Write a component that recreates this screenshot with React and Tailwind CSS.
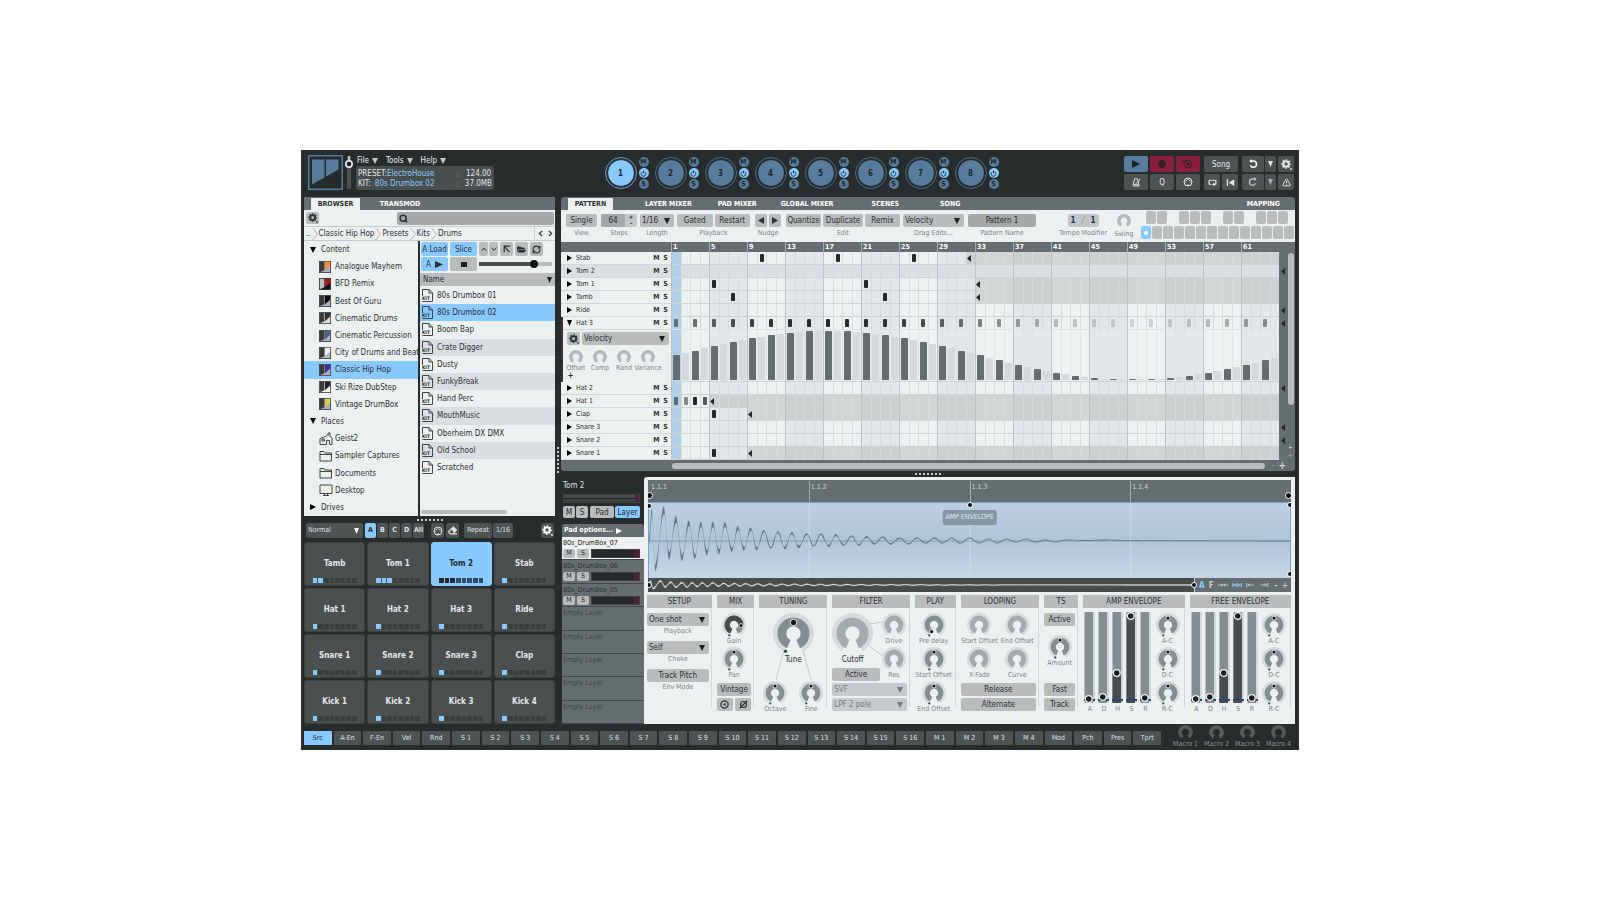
import React from 'react';
import { FaFolderOpen, FaEraser } from 'react-icons/fa';
import { TriangleAlert, Search, RefreshCw } from 'lucide-react';

const TREE = [
  { label: 'Content', group: 'open' },
  { label: 'Analogue Mayhem', kit: ['#3a3a3a', '#f58a2c', '#a9aec0'] },
  { label: 'BFD Remix', kit: ['#b9bdbd', '#b0151c', '#111111'] },
  { label: 'Best Of Guru', kit: ['#3a3a3a', '#0a0a0a', '#a9aec0'] },
  { label: 'Cinematic Drums', kit: ['#3a3a3a', '#2f3234', '#dfe2e4'] },
  { label: 'Cinematic Percussion', kit: ['#3a3a3a', '#4c5f80', '#a9aec0'] },
  { label: 'City of Drums and Beat', kit: ['#3a3a3a', '#eceff0', '#b4b8c6'] },
  { label: 'Classic Hip Hop', kit: ['#3a3a3a', '#41309c', '#a9aec0'], active: true },
  { label: 'Ski Rize DubStep', kit: ['#3a3a3a', '#222425', '#f2f4f5'] },
  { label: 'Vintage DrumBox', kit: ['#3a3a3a', '#d8d04a', '#a9aec0'] },
  { label: 'Places', group: 'open' },
  { label: 'Geist2', icon: 'home' },
  { label: 'Sampler Captures', icon: 'folder' },
  { label: 'Documents', icon: 'folder' },
  { label: 'Desktop', icon: 'desktop' },
  { label: 'Drives', group: 'closed' },
];

const KITS = ['80s Drumbox 01', '80s Drumbox 02', 'Boom Bap', 'Crate Digger', 'Dusty', 'FunkyBreak', 'Hand Perc', 'MouthMusic', 'Oberheim DX DMX', 'Old School', 'Scratched'];

const PADS = [
  ['Tamb', 2], ['Tom 1', 3], ['Tom 2', 3], ['Stab', 1],
  ['Hat 1', 1], ['Hat 2', 1], ['Hat 3', 1], ['Ride', 1],
  ['Snare 1', 1], ['Snare 2', 1], ['Snare 3', 1], ['Clap', 1],
  ['Kick 1', 1], ['Kick 2', 1], ['Kick 3', 1], ['Kick 4', 1],
];

const STEPS = Array.from({ length: 64 }, (_, i) => i);
const wave = (i) => 0.5 + 0.5 * Math.sin((2 * Math.PI * i) / 64);

const hat3 = {};
STEPS.filter((i) => i % 2 === 0).forEach((i) => { hat3[i] = 0.15 + 0.85 * wave(i); });

const TRACKS = [
  { name: 'Stab', notes: { 9: 1, 17: 1, 25: 1 }, end: 31 },
  { name: 'Tom 2', notes: {}, selected: true },
  { name: 'Tom 1', notes: { 4: 1, 20: 1 }, end: 32 },
  { name: 'Tamb', notes: { 6: 1, 22: 1 }, end: 32 },
  { name: 'Ride', notes: {} },
  { name: 'Hat 3', notes: hat3, open: true },
  { name: 'Hat 2', notes: {} },
  { name: 'Hat 1', notes: { 0: 0.6, 1: 0.5, 2: 1, 3: 0.75 }, end: 4 },
  { name: 'Clap', notes: { 4: 1 }, end: 8 },
  { name: 'Snare 3', notes: {} },
  { name: 'Snare 2', notes: {} },
  { name: 'Snare 1', notes: { 4: 1 }, end: 8 },
];

const SOURCES = ['Src', 'A-En', 'F-En', 'Vel', 'Rnd', ...Array.from({ length: 16 }, (_, i) => `S ${i + 1}`), 'M 1', 'M 2', 'M 3', 'M 4', 'Mod', 'Pch', 'Pres', 'Tprt'];

// Peaks and troughs of the tom sample: [x, height above the centre line]
const EXTREMA = [
  [0, 0], [3, 31], [6, -27], [15, 31], [20, -15], [27, 22], [33, -17], [40, 18], [46, -16], [52, 17], [58, -12], [64, 17],
  [70, -11], [76, 17], [83, -9], [89, 13], [95, -8], [102, 12], [108, -8], [115, 10], [122, -7], [129, 9], [136, -7],
  [143, 8], [150, -6], [158, 7], [165, -5], [172, 7], [180, -5], [187, 6], [195, -4], [203, 5], [210, -4], [218, 4],
  [226, -3], [234, 4], [242, -3], [251, 3], [260, -3], [268, 3], [277, -2], [286, 3], [294, -2], [303, 3], [312, -2],
  [321, 3], [331, -2], [340, 2], [349, -2], [358, 2], [368, -1], [377, 2], [387, -1], [397, 1], [407, -1], [417, 1],
  [436, 0.5], [457, 1], [477, 0.6], [510, 0.3], [642, 0],
];

function sampleAt(x) {
  const n = EXTREMA.findIndex((p) => p[0] >= x);
  if (n <= 0) return EXTREMA[0][1];
  const [x0, y0] = EXTREMA[n - 1];
  const [x1, y1] = EXTREMA[n];
  const t = (1 - Math.cos((Math.PI * (x - x0)) / (x1 - x0))) / 2;
  return y0 + (y1 - y0) * t;
}

function wavePath(mid, scale, thick) {
  const top = [];
  const bottom = [];
  for (let x = 0; x <= 642; x += 1) {
    const y = mid - sampleAt(x) * scale;
    const rough = thick * Math.exp(-x / 110) * (1 + 0.7 * Math.sin(x * 7.3));
    top.push(`${x},${(y - 0.4 - rough).toFixed(2)}`);
    bottom.unshift(`${x},${(y + 0.4 + rough).toFixed(2)}`);
  }
  return `M${top.join('L')}L${bottom.join('L')}Z`;
}

const Down = ({ className = 'w-[6px] h-[6px]' }) => (
  <svg viewBox="0 0 10 10" preserveAspectRatio="none" fill="currentColor" className={className}><path d="M0 0h10L5 10z" /></svg>
);
const Right = ({ className = 'w-[6px] h-[6px]' }) => (
  <svg viewBox="0 0 10 10" preserveAspectRatio="none" fill="currentColor" className={className}><path d="M0 0v10l10-5z" /></svg>
);
const Left = ({ className = 'w-[6px] h-[6px]' }) => (
  <svg viewBox="0 0 10 10" preserveAspectRatio="none" fill="currentColor" className={className}><path d="M10 0v10L0 5z" /></svg>
);

const Gear = ({ className = 'w-[10px] h-[10px]' }) => (
  <svg viewBox="0 0 24 24" fill="none" stroke="currentColor" className={className}>
    <circle cx="11" cy="11" r="6" strokeWidth="4.5" />
    <circle cx="11" cy="11" r="9" strokeWidth="3" pathLength="80" strokeDasharray="5 5" strokeDashoffset="2.5" />
    <rect x="20" y="20" width="3.5" height="3.5" fill="currentColor" stroke="none" />
  </svg>
);

// Five pin MIDI socket
const Midi = ({ className = 'w-[10px] h-[10px]' }) => (
  <svg viewBox="0 0 12 12" fill="none" stroke="currentColor" className={className}>
    <circle cx="6" cy="6" r="4.800" strokeWidth="1.200" />
    <g fill="currentColor" stroke="none">
      <circle cx="3.200" cy="6" r="0.700" /><circle cx="4" cy="4" r="0.700" /><circle cx="6" cy="3.200" r="0.700" /><circle cx="8" cy="4" r="0.700" /><circle cx="8.800" cy="6" r="0.700" />
      <path d="M5 9h2v1.800H5z" />
    </g>
  </svg>
);

const Power = () => (
  <svg viewBox="0 0 12 12" fill="none" stroke="currentColor" strokeWidth="1.5" className="w-[7px] h-[7px]">
    <path d="M4 3.2a4 4 0 1 0 4 0M6 1v4.5" />
  </svg>
);

function polar(c, r, deg) {
  const a = ((deg - 90) * Math.PI) / 180;
  return `${(c + r * Math.cos(a)).toFixed(2)} ${(c + r * Math.sin(a)).toFixed(2)}`;
}
function arc(r, from, to) {
  return `M${polar(12, r, from)}A${r} ${r} 0 ${to - from > 180 ? 1 : 0} 1 ${polar(12, r, to)}`;
}

// Plain grey knob without ring or pointer
const MiniKnob = ({ color = '#b6b9bb', className = 'w-[14px] h-[14px]' }) => (
  <svg viewBox="0 0 24 24" fill="none" className={className}>
    <path d={arc(8.8, -148, 148)} stroke={color} strokeWidth="6" />
  </svg>
);

const Dial = ({ big, off, value = 0, fill, dark }) => {
  const [px, py] = polar(12, big ? 6.5 : 7, value).split(' ');
  return (
    <svg viewBox="0 0 24 24" fill="none" className={big ? 'w-[41px] h-[41px]' : 'w-[24px] h-[24px]'}>
      <path d={arc(10.7, -150, 150)} stroke="#d7dadb" strokeWidth="2.6" />
      <path d={arc(6.8, -156, 156)} stroke={off ? '#a3abaf' : '#848d92'} strokeWidth="5.2" />
      {fill && <path d={arc(6.8, -156, 90)} stroke={dark} strokeWidth="5.2" />}
      {!off && (
        <>
          <circle cx={px} cy={py} r={big ? 2 : 2.4} fill="#e6e9ea" />
          <circle cx={px} cy={py} r={big ? 1.5 : 1.6} fill="#111" />
          <circle cx="7.3" cy="22.4" r={big ? 1 : 1.1} fill="#264a74" />
        </>
      )}
    </svg>
  );
};

function Knob({ label, big, ...rest }) {
  return (
    <label className={`relative flex shrink-0 flex-col items-center text-[7px] whitespace-nowrap ${big ? 'h-[52px] leading-[11px] text-[#2c3032] text-[8px]' : 'h-[34px] leading-[9px] text-[#7d8488]'}`}>
      <Dial big={big} {...rest} />
      <span>{label}</span>
      <input type="range" className="sr-only" />
    </label>
  );
}

const Btn = ({ className = '', children, ...rest }) => (
  <button type="button" className={`flex items-center justify-center rounded-[2px] whitespace-nowrap ${className}`} {...rest}>{children}</button>
);

function Drop({ value, label, className = '', muted }) {
  return (
    <span className={`relative flex ${className}`}>
      <select aria-label={label} defaultValue={value} className={`appearance-none h-[13px] w-full rounded-[2px] pl-[2px] outline-none ${muted ? 'bg-[#c7cacc] text-[#73797c]' : 'bg-[#b9bbbc] text-[#2c3032]'}`}>
        <option>{value}</option>
      </select>
      <Down className={`pointer-events-none absolute right-[4px] top-[4px] w-[6px] h-[6px] ${muted ? 'text-[#73797c]' : 'text-[#1d2021]'}`} />
    </span>
  );
}

function KitThumb({ colors }) {
  return (
    <svg viewBox="0 0 12 12" className="w-[12px] h-[12px] shrink-0">
      <rect width="12" height="12" fill="#3c3f42" />
      <rect x="0.8" y="0.8" width="10.4" height="10.4" fill={colors[2]} />
      <path d="M0.8 0.8h4.6v8.4l-4.6 2z" fill={colors[0]} />
      <path d="M6 0.8h5.2v3.8L6 9.2z" fill={colors[1]} />
    </svg>
  );
}

function PlaceIcon({ type }) {
  const paths = {
    home: 'M1 6.500 6.500 4.500 9 2.500l4 3.500v6.500h-2.500V8.500h-3v4H1zM9 2.500V1h2v2.500M3 7h2.500v2H3z',
    folder: 'M1 12V2.500h4L6 4h6.500v8zM1 5.500h11.500',
    desktop: 'M1 2h12v8.500H1zM4 12.500h6M5.500 10.500v2M8.500 10.500v2',
  };
  return (
    <svg viewBox="0 0 14 14" fill="none" stroke="#2f3335" strokeWidth="0.9" className="w-[14px] h-[14px] shrink-0">
      <path d={paths[type]} />
    </svg>
  );
}

const KitFile = () => (
  <svg viewBox="0 0 11 13" fill="none" stroke="#2f3335" strokeWidth="0.9" className="w-[11px] h-[13px] shrink-0">
    <path d="M0.500 7V0.500h6.500l3.500 3.500V12.500H0.500M7 0.500V4h3.500" />
    <text x="0" y="11.300" fontSize="4.800" fill="#2f3335" stroke="none" fontWeight="bold">KIT</text>
  </svg>
);

const Dots = ({ vertical }) => (
  <div className={`flex gap-[2px] ${vertical ? 'flex-col' : ''}`}>
    {[0, 1, 2, 3, 4, 5, 6].map((n) => <i key={n} className="w-[2px] h-[2px] bg-[#c9cdce]" />)}
  </div>
);

function Engine({ n }) {
  const on = n === 1;
  return (
    <div className="flex items-center gap-[2px]">
      <button type="button" className={`w-[32px] h-[32px] rounded-full border p-px ${on ? 'border-[#6b9cc4]' : 'border-[#4b6a85]'}`}>
        <span className={`flex w-full h-full items-center justify-center rounded-full border border-[#1f2526] font-bold text-[8px] text-[#22282b] ${on ? 'bg-[#88c9ff]' : 'bg-[#587c9b]'}`}>{n}</span>
      </button>
      <div className="flex flex-col gap-px text-[7px] font-bold text-[#22282b]">
        <Btn className="w-[10px] h-[10px] rounded-full bg-[#587c9b]">M</Btn>
        <Btn className="w-[10px] h-[10px] rounded-full bg-[#88c9ff]" aria-label="Power"><Power /></Btn>
        <Btn className="w-[10px] h-[10px] rounded-full bg-[#587c9b]">S</Btn>
      </div>
    </div>
  );
}

const Undo = ({ className = '' }) => (
  <svg viewBox="0 0 12 12" fill="none" stroke="currentColor" strokeWidth="1.8" className={`w-[10px] h-[10px] ${className}`}>
    <path d="M3 2.500h3.500a3.700 3.700 0 1 1-3.500 5" /><path d="M4.500 0v5L1.500 2.500z" fill="currentColor" stroke="none" />
  </svg>
);

function Header() {
  const grey = 'h-[16px] bg-[#4d5253] text-[#e4e8e9]';
  return (
    <header className="flex h-[47px] justify-between px-[7px] pt-[5px] pr-[5px]">
      <div className="flex">
        <svg viewBox="0 0 35 35" className="w-[35px] h-[35px]">
          <rect x="0.750" y="0.750" width="33.500" height="33.500" fill="#252a2c" stroke="#587c9b" strokeWidth="1.500" />
          <path d="M4 4.500h12.500v18L4 29.500z" fill="#587c9b" />
          <path d="M18 4.500h12.500v10L18 21.500z" fill="#587c9b" />
        </svg>
        <svg viewBox="0 0 10 35" className="ml-px w-[10px] h-[35px]">
          <rect x="3" y="1" width="4" height="33" fill="#4d5253" />
          <circle cx="5" cy="9" r="3.200" fill="#252a2c" stroke="#f1f3f4" strokeWidth="1.500" />
          <path d="M5 1v4" stroke="#f1f3f4" strokeWidth="1.500" />
        </svg>
        <div className="ml-[2px] flex flex-col">
          <nav className="flex h-[11px] items-center gap-[8px] pl-px text-[#eef1f2]">
            {['File', 'Tools', 'Help'].map((m) => (
              <button key={m} type="button" className="flex items-center gap-[3px]">{m}<Down className="w-[6px] h-[6px] text-[#c3c7c9]" /></button>
            ))}
          </nav>
          <div className="flex h-[24px] w-[138px] flex-col justify-center rounded-[3px] bg-[#484d4e] px-[2px] pt-px leading-[10px] text-[#e4e8e9]">
            <p className="flex"><span className="w-[29px]">PRESET:</span><span className="w-[64px] text-[#88c9ff]">ElectroHouse</span><span className="w-[15px] text-center text-[6px] text-[#7b8183]">△</span>124.00</p>
            <p className="flex"><span className="w-[17px]">KIT:</span><span className="w-[76px] text-[#88c9ff]">80s Drumbox 02</span><span className="w-[15px] text-center text-[6px] text-[#7b8183]">○</span>37.0MB</p>
          </div>
        </div>
      </div>
      <div className="mr-[15px] flex h-[36px] items-center gap-[6px]">
        {[1, 2, 3, 4, 5, 6, 7, 8].map((n) => <Engine key={n} n={n} />)}
      </div>
      <div className="flex flex-col gap-[2px] pt-px">
        <div className="flex gap-[2px]">
          <Btn aria-label="Play" className="h-[16px] w-[24px] bg-[#587c9b] text-[#1b1f21]"><Right className="w-[8px] h-[8px]" /></Btn>
          <Btn aria-label="Record" className="h-[16px] w-[24px] bg-[#8c1f3f] text-[#2b2025]"><i className="w-[8px] h-[8px] rounded-full bg-[#33252b]" /></Btn>
          <Btn aria-label="Overdub" className="mr-[2px] h-[16px] w-[24px] bg-[#8c1f3f] text-[#33252b]">
            <svg viewBox="0 0 12 12" fill="none" stroke="currentColor" strokeWidth="1.300" className="w-[10px] h-[10px]"><path d="M2 4a4.500 4.500 0 1 1 0 4M1 1.500V4.500h3" /><circle cx="6.500" cy="6" r="1.500" fill="currentColor" /></svg>
          </Btn>
          <Btn className={`w-[34px] mr-[2px] ${grey}`}>Song</Btn>
          <div className="flex">
            <Btn aria-label="Undo" className={`w-[22px] ${grey}`}><Undo className="text-white" /></Btn>
            <Btn aria-label="Undo history" className={`w-[12px] border-l border-[#2a2e2f] ${grey}`}><Down className="w-[5px] h-[6px]" /></Btn>
          </div>
          <Btn aria-label="Settings" className={`w-[16px] ${grey}`}><Gear className="w-[11px] h-[11px]" /></Btn>
        </div>
        <div className="flex gap-[2px]">
          <Btn aria-label="Metronome" className={`w-[24px] ${grey}`}>
            <svg viewBox="0 0 12 12" fill="none" stroke="currentColor" strokeWidth="1.300" className="w-[9px] h-[9px]"><path d="M3.500 1h4L9 9H1.500zM1 10.500h9.500M5 8l6-7" /></svg>
          </Btn>
          <Btn className={`w-[24px] ${grey}`}>Q</Btn>
          <Btn aria-label="MIDI" className={`mr-[2px] w-[24px] ${grey}`}><Midi /></Btn>
          <Btn aria-label="Loop" className={`w-[16px] ${grey}`}>
            <svg viewBox="0 0 12 12" fill="none" stroke="currentColor" strokeWidth="1.600" className="w-[9px] h-[9px]"><path d="M4 8.500H2.500a1 1 0 0 1-1-1V4a1 1 0 0 1 1-1h7a1 1 0 0 1 1 1v3.500a1 1 0 0 1-1 1H7.500" /><path d="M8.500 6v5L5 8.500z" fill="currentColor" stroke="none" /></svg>
          </Btn>
          <Btn aria-label="Rewind" className={`mr-[2px] w-[16px] ${grey}`}>
            <svg viewBox="0 0 12 12" fill="currentColor" className="w-[9px] h-[9px]"><path d="M1 1.500h1.800v9H1zM11 1.500v9L3.500 6z" /></svg>
          </Btn>
          <div className="flex">
            <Btn aria-label="Redo" className={`w-[22px] ${grey}`}><Undo className="-scale-x-100 text-[#b5b9bb]" /></Btn>
            <Btn aria-label="Redo history" className={`w-[12px] border-l border-[#2a2e2f] ${grey}`}><Down className="w-[5px] h-[6px] text-[#a6aaac]" /></Btn>
          </div>
          <Btn aria-label="Panic" className={`w-[16px] ${grey}`}><TriangleAlert className="w-[9px] h-[9px]" strokeWidth={2.5} /></Btn>
        </div>
      </div>
    </header>
  );
}

function Browser() {
  const grey = 'h-[14px] bg-[#b9bbbc] text-[#2c3032]';
  return (
    <section className="flex flex-1 min-h-0 flex-col overflow-hidden rounded-t-[3px] bg-[#edf0f1] text-[#2c3032]">
      <div className="flex h-[13px] items-end bg-[#666d70] pl-[7px] text-[7px] font-bold">
        <button type="button" className="h-[12px] w-[49px] bg-[#edf0f1]">BROWSER</button>
        <button type="button" className="h-[12px] w-[80px] text-white">TRANSMOD</button>
      </div>
      <div className="flex h-[16px] items-center justify-between pl-[2px] pr-px">
        <Btn aria-label="Browser settings" className="h-[12px] w-[13px] bg-[#b9bbbc]"><Gear /></Btn>
        <label className="flex h-[13px] w-[157px] items-center rounded-[2px] bg-[#a5a7a8] pl-[2px]">
          <Search className="h-[9px] w-[9px] shrink-0" strokeWidth={4} />
          <input aria-label="Search" className="w-full bg-transparent pl-[2px] outline-none" />
        </label>
      </div>
      <div className="flex h-[15px] items-center border-y border-[#c9cccd] pl-[2px]">
        {['..', 'Classic Hip Hop', 'Presets', 'Kits', 'Drums'].map((c, i) => (
          <React.Fragment key={c}>
            {i > 0 && <svg viewBox="0 0 6 12" fill="none" stroke="#b5b9bb" className="mx-px h-[12px] w-[6px]"><path d="M0.500 0 5.500 6 0.500 12" /></svg>}
            <a href="#" className="whitespace-nowrap">{c}</a>
          </React.Fragment>
        ))}
        <div className="ml-auto flex h-full w-[21px] items-center justify-around border-l border-[#c9cccd]">
          <Btn aria-label="Back"><svg viewBox="0 0 6 8" fill="none" stroke="currentColor" strokeWidth="1.300" className="h-[7px] w-[5px]"><path d="M5 1 1.500 4 5 7" /></svg></Btn>
          <Btn aria-label="Forward"><svg viewBox="0 0 6 8" fill="none" stroke="currentColor" strokeWidth="1.300" className="h-[7px] w-[5px]"><path d="M1 1 4.500 4 1 7" /></svg></Btn>
        </div>
      </div>
      <div className="flex flex-1 min-h-0">
        <ul className="flex w-[116px] flex-col overflow-hidden border-r-2 border-[#272c2d]">
          {TREE.map((item) => (
            <li key={item.label} className={`flex flex-1 items-center whitespace-nowrap ${item.group ? 'gap-[5px] pl-[6px]' : 'gap-[4px] pl-[15px]'} ${item.active ? 'bg-[#88c9ff]' : ''}`}>
              {item.group === 'open' && <Down className="h-[6px] w-[6px] text-black" />}
              {item.group === 'closed' && <Right className="h-[6px] w-[6px] text-black" />}
              {item.kit && <KitThumb colors={item.kit} />}
              {item.icon && <PlaceIcon type={item.icon} />}
              <span className={item.icon ? '-ml-[2px]' : ''}>{item.label}</span>
            </li>
          ))}
        </ul>
        <div className="flex flex-1 flex-col">
          <div className="flex gap-[2px] pl-px pt-px">
            <Btn className="h-[14px] w-[27px] bg-[#88c9ff]">A Load</Btn>
            <Btn className="h-[14px] w-[27px] bg-[#88c9ff]">Slice</Btn>
            <div className="flex gap-px">
              <Btn aria-label="Previous" className={`w-[9px] ${grey}`}><svg viewBox="0 0 8 6" fill="none" stroke="currentColor" strokeWidth="1.300" className="w-[6px]"><path d="M1 5 4 1.500 7 5" /></svg></Btn>
              <Btn aria-label="Next" className={`w-[9px] ${grey}`}><svg viewBox="0 0 8 6" fill="none" stroke="currentColor" strokeWidth="1.300" className="w-[6px]"><path d="M1 1 4 4.500 7 1" /></svg></Btn>
            </div>
            <Btn aria-label="Up" className={`w-[13px] ${grey}`}><svg viewBox="0 0 10 10" fill="none" stroke="currentColor" strokeWidth="1.500" className="w-[8px]"><path d="M1.500 9V1.500H9M2 2l6 7" /></svg></Btn>
            <Btn aria-label="Open folder" className={`w-[13px] ${grey}`}><FaFolderOpen className="h-[9px] w-[9px]" /></Btn>
            <Btn aria-label="Refresh" className={`w-[13px] ${grey}`}><RefreshCw className="h-[9px] w-[9px]" strokeWidth={3} /></Btn>
          </div>
          <div className="flex items-center gap-[2px] pl-px pt-px pb-[2px]">
            <Btn className="h-[14px] w-[27px] gap-[4px] bg-[#88c9ff]">A<Right className="h-[7px] w-[8px]" /></Btn>
            <Btn aria-label="Stop" className={`w-[27px] ${grey}`}><i className="h-[5px] w-[6px] bg-[#1d2021]" /></Btn>
            <label className="relative flex flex-1 items-center pr-[3px]">
              <i className="h-[4px] w-[51px] bg-[#484d4e]" />
              <i className="h-[8px] w-[8px] rounded-full bg-[#111]" />
              <i className="h-[4px] flex-1 bg-[#b9bbbc]" />
              <input type="range" aria-label="Preview volume" className="absolute inset-0 w-full opacity-0" />
            </label>
          </div>
          <div className="flex h-[13px] items-center justify-between bg-[#b9bbbc] pl-[3px] pr-[3px]">Name<Down className="h-[6px] w-[5px] text-[#1d2021]" /></div>
          <ul className="flex h-[190px] flex-col pt-px">
            {KITS.map((k, i) => (
              <li key={k} className={`flex flex-1 items-center gap-[4px] pl-[2px] ${i === 1 ? 'bg-[#88c9ff]' : i % 2 ? 'bg-[#dadee2]' : ''}`}>
                <KitFile />{k}
              </li>
            ))}
          </ul>
          <div className="mt-auto mb-[2px] ml-px h-[4px] w-[86px] rounded-full bg-[#b9bbbc]" />
        </div>
      </div>
    </section>
  );
}

function Pads() {
  const grey = 'h-[15px] bg-[#4d5253] text-[#dfe3e4]';
  return (
    <section>
      <div className="flex pl-[2px] text-[7px]">
        <span className="relative flex w-[57px]">
          <select aria-label="Pad mode" className={`w-full appearance-none rounded-[2px] pl-[2px] ${grey}`}><option>Normal</option></select>
          <Down className="pointer-events-none absolute right-[4px] top-[5px] h-[6px] w-[5px] text-white" />
        </span>
        <div className="ml-[2px] flex gap-px font-bold">
          {['A', 'B', 'C', 'D', 'All'].map((b) => (
            <Btn key={b} className={`w-[11px] ${b === 'A' ? 'h-[15px] bg-[#88c9ff] text-[#22282b]' : grey}`}>{b}</Btn>
          ))}
        </div>
        <Btn aria-label="MIDI learn" className={`ml-[7px] w-[13px] ${grey}`}><Midi /></Btn>
        <Btn aria-label="Erase" className={`ml-[2px] w-[13px] ${grey}`}><FaEraser className="h-[9px] w-[9px]" /></Btn>
        <Btn className={`ml-[5px] w-[28px] ${grey}`}>Repeat</Btn>
        <Btn className={`ml-px w-[20px] ${grey}`}>1/16</Btn>
        <Btn aria-label="Pad settings" className={`ml-auto mr-px w-[13px] ${grey}`}><Gear className="h-[11px] w-[11px] text-white" /></Btn>
      </div>
      <div className="mt-[4px] grid grid-cols-4 gap-[2px]">
        {PADS.map(([name, layers]) => {
          const on = name === 'Tom 2';
          return (
            <button type="button" key={name} className={`flex h-[44px] flex-col items-center rounded-[3px] border text-[8px] font-bold ${on ? 'border-[#88c9ff] bg-[#88c9ff] text-[#22282b]' : 'border-[#3c4142] bg-[#4b4f50] text-[#e4e8e9]'}`}>
              <span className="flex flex-1 items-end">{name}</span>
              <span className="mb-[2px] mt-[10px] grid w-[44px] grid-cols-8 gap-px">
                {STEPS.slice(0, 8).map((i) => (
                  <i key={i} className={`h-[5px] ${on ? (i < layers ? 'bg-[#22282b]' : 'bg-[#2c4a66]') : i < layers ? 'bg-[#88c9ff]' : 'bg-[#3a3e3f]'}`} />
                ))}
              </span>
            </button>
          );
        })}
      </div>
    </section>
  );
}

// Labelled group of controls in the pattern tool bar
const Tool = ({ label, className = '', children }) => (
  <div className={`flex flex-col items-center ${className}`}>
    <div className="flex w-full gap-[2px]">{children}</div>
    <span className="leading-[13px] text-[7px] text-[#7d8488] whitespace-nowrap">{label}</span>
  </div>
);

function PatternTools() {
  const grey = 'h-[13px] flex-1 bg-[#b9bbbc] text-[#2c3032]';
  const key = 'h-[13px] rounded-[2px]';
  return (
    <div className="flex h-[32px] items-start pl-[5px] pr-px pt-[4px]">
      <Tool label="View" className="w-[31px]"><Btn className={grey}>Single</Btn></Tool>
      <Tool label="Steps" className="ml-[4px] w-[36px]">
        <span className="flex h-[13px] w-full overflow-hidden rounded-[2px] bg-[#c3c6c7]">
          <input aria-label="Steps" defaultValue="64" className="w-[24px] bg-[#a5a7a8] text-center" />
          <span className="flex flex-1 flex-col text-[6px] leading-[6px] font-bold"><button type="button">+</button><button type="button">–</button></span>
        </span>
      </Tool>
      <Tool label="Length" className="ml-[3px] w-[34px]"><Drop value="1/16" label="Length" className="w-full" /></Tool>
      <Tool label="Playback" className="ml-[3px] w-[73px]"><Btn className={grey}>Gated</Btn><Btn className={grey}>Restart</Btn></Tool>
      <Tool label="Nudge" className="ml-[5px] w-[26px]">
        <Btn aria-label="Nudge left" className={grey}><Left className="h-[7px] w-[6px]" /></Btn>
        <Btn aria-label="Nudge right" className={grey}><Right className="h-[7px] w-[6px]" /></Btn>
      </Tool>
      <Tool label="Edit" className="ml-[5px] w-[114px]"><Btn className={`${grey} grow-0 basis-auto w-[35px]`}>Quantize</Btn><Btn className={grey}>Duplicate</Btn><Btn className={`${grey} grow-0 basis-auto w-[35px]`}>Remix</Btn></Tool>
      <Tool label="Drag Edits..." className="ml-[3px] w-[61px]"><Drop value="Velocity" label="Drag Edits" className="w-full" /></Tool>
      <Tool label="Pattern Name" className="ml-[4px] w-[68px]"><input aria-label="Pattern Name" defaultValue="Pattern 1" className="h-[13px] w-full rounded-[2px] bg-[#a5a7a8] text-center" /></Tool>
      <div className="ml-auto flex">
        <Tool label="Tempo Modifier" className="w-[50px]">
          <span className="mx-auto flex h-[13px] w-[31px] items-center justify-around rounded-[2px] bg-[#c3c6c7] text-[#1c2f5c]"><b>1</b><i className="text-[#8a9093]">/</i><b>1</b></span>
        </Tool>
        <label className="relative ml-[4px] flex w-[24px] flex-col items-center text-[7px] leading-[12px] text-[#7d8488]">
          <MiniKnob className="h-[14px] w-[14px]" />Swing
          <input type="range" className="sr-only" />
        </label>
        <div className="-mt-[3px] ml-[5px] flex w-[153px] flex-col gap-[2px]">
          <div className="grid grid-cols-14 gap-px pl-[5px] -mr-[5px]">
            {[1, 1, 0, 1, 1, 1, 0, 1, 1, 0, 1, 1, 1, 0].map((k, i) => <button type="button" key={i} aria-label={`Black key ${i + 1}`} className={`${key} ${k ? 'bg-[#b9bbbc]' : 'invisible'}`} />)}
          </div>
          <div className="grid grid-cols-14 gap-px">
            {STEPS.slice(0, 14).map((i) => (
              <button type="button" key={i} aria-label={`Pattern ${i + 1}`} className={`flex items-center justify-center ${key} ${i ? 'bg-[#b9bbbc]' : 'bg-[#88c9ff]'}`}>
                {i === 0 && <i className="h-[4px] w-[4px] rounded-full bg-white" />}
              </button>
            ))}
          </div>
        </div>
      </div>
    </div>
  );
}

function cellColor(i, track) {
  if (i === 0) return 'bg-[#b0cfe8]';
  if (track.end !== undefined && i >= track.end) return Math.floor(i / 4) % 2 ? 'bg-[#cdd0d1]' : 'bg-[#d2d5d6]';
  if (track.selected) return 'bg-[#dadfe3]';
  return Math.floor(i / 4) % 2 ? 'bg-[#e2e7ea]' : 'bg-[#eef1f2]';
}

function Track({ track }) {
  return (
    <div className={`flex ${track.open ? 'border-l-2 border-[#3a2f33]' : ''}`}>
      <div className={`shrink-0 ${track.open ? 'w-[108px]' : 'w-[110px]'}`}>
        <div className={`flex h-[13px] items-center border-b border-[#d3d7d9] pr-px ${track.open ? 'pl-[4px]' : 'pl-[6px]'} ${track.selected ? 'bg-[#dadfe3]' : ''}`}>
          {track.open ? <Down className="h-[6px] w-[5px] text-black" /> : <Right className="h-[6px] w-[5px] text-black" />}
          <span className="ml-[4px] flex-1 text-[7px]">{track.name}</span>
          <Btn className="w-[9px] font-bold text-[7px]">M</Btn><Btn className="w-[9px] font-bold text-[7px]">S</Btn>
        </div>
        {track.open && (
          <div className="flex h-[52px] flex-col pl-[4px] pt-[2px]">
            <div className="flex gap-[2px] pr-[2px]">
              <Btn aria-label="Lane settings" className="h-[13px] w-[13px] bg-[#b9bbbc]"><Gear /></Btn>
              <Drop value="Velocity" label="Lane" className="flex-1" />
            </div>
            <div className="-ml-[3px] mt-[5px] flex text-[7px] leading-[8px] text-[#7d8488]">
              {['Offset', 'Comp', 'Rand', 'Variance'].map((k) => (
                <label key={k} className="relative flex w-[24px] flex-col items-center"><MiniKnob />{k}<input type="range" className="sr-only" /></label>
              ))}
            </div>
            <button type="button" className="h-[8px] w-[7px] font-bold leading-[8px] text-[#2b2f6c]">+</button>
          </div>
        )}
      </div>
      <div className="flex-1">
        <div className="grid grid-cols-[repeat(64,minmax(0,1fr))]">
          {STEPS.map((i) => (
            <div key={i} className={`flex h-[13px] items-center border-b border-l ${track.end === i ? 'justify-start' : 'justify-center'} ${i % 4 ? 'border-l-[#d7dbdd]' : 'border-l-[#bcc0c2]'} ${track.open ? 'border-b-[#dfe2e4]' : 'border-b-[#cfd3d4]'} ${cellColor(i, track)}`}>
              {track.notes[i] && <i className="h-[8px] w-[4px] rounded-[1px] bg-[#22282a]" style={{ opacity: track.notes[i] }} />}
              {track.end === i && <Left className="h-[7px] w-[4px] text-[#22282a]" />}
            </div>
          ))}
        </div>
        {track.open && (
          <div className="grid h-[52px] grid-cols-[repeat(64,minmax(0,1fr))]">
            {STEPS.map((i) => (
              <div key={i} className={`flex items-end justify-center border-l border-b pb-px border-b-[#cfd3d4] ${i % 4 ? 'border-l-[#dfe3e5]' : 'border-l-[#bcc0c2]'} ${cellColor(i, track)}`}>
                <i className={`w-[7px] rounded-t-[1px] ${i % 2 ? 'bg-[#d5d9db]' : 'bg-[#656c6f]'}`} style={{ height: Math.max(1, Math.round(wave(i) * 49)) }} />
              </div>
            ))}
          </div>
        )}
      </div>
      <div className={`flex w-[16px] bg-[#666d70] pl-[2px] ${track.open ? 'pt-[3px]' : 'h-[13px] items-center'}`}>
        {track.end === undefined && <Left className="h-[7px] w-[4px] text-[#22282a]" />}
      </div>
    </div>
  );
}

function Pattern() {
  return (
    <section className="overflow-hidden rounded-[3px] bg-[#666d70] text-[#2c3032]">
      <div className="flex h-[13px] items-end pl-[7px] pr-[15px] text-[7px] font-bold text-white">
        <button type="button" className="h-[12px] w-[45px] bg-[#edf0f1] text-[#2c3032]">PATTERN</button>
        <button type="button" className="ml-[32px] h-[12px]">LAYER MIXER</button>
        <button type="button" className="ml-[26px] h-[12px]">PAD MIXER</button>
        <button type="button" className="ml-[24px] h-[12px]">GLOBAL MIXER</button>
        <button type="button" className="ml-[38px] h-[12px]">SCENES</button>
        <button type="button" className="ml-[41px] h-[12px]">SONG</button>
        <button type="button" className="ml-auto h-[12px]">MAPPING</button>
      </div>
      <div className="bg-[#edf0f1]"><PatternTools /></div>
      <div className="flex h-[10px] pl-[110px] pr-[16px] text-[7px] font-bold text-white">
        <div className="grid flex-1 grid-cols-16">
          {STEPS.filter((i) => i % 4 === 0).map((i) => <span key={i} className="border-l border-[#a9aeb0] pl-px leading-[10px]">{i + 1}</span>)}
        </div>
      </div>
      <div className="relative bg-[#edf0f1]">
        {TRACKS.map((t) => <Track key={t.name} track={t} />)}
        {/* vertical scroll bar and zoom over the gutter */}
        <div className="absolute inset-y-0 right-0 flex w-[9px] flex-col items-center bg-[#666d70] text-[9px] font-bold leading-[8px] text-[#d0d4d5]">
          <i className="mt-px h-[152px] w-[6px] rounded-full bg-[#b9bbbc]" />
          <button type="button" aria-label="Shrink rows" className="mt-auto">-</button>
          <button type="button" aria-label="Grow rows" className="mb-px text-[#8f9597]">+</button>
        </div>
      </div>
      <div className="flex h-[11px] items-center pl-[111px] pr-[9px] font-bold text-[#d0d4d5]">
        <i className="h-[6px] flex-1 rounded-full bg-[#b9bbbc]" />
        <button type="button" className="ml-[6px] text-[#8f9597]">-</button>
        <button type="button" className="ml-[4px] text-[10px]">+</button>
      </div>
    </section>
  );
}

const Meter = () => <i className="flex h-[9px] flex-1 justify-end border border-[#3c4143] bg-[#24282a]"><i className="w-[5px] bg-[#521f35]" /></i>;

function Layers() {
  const grey = 'h-[12px] bg-[#b9bbbc] text-[#2c3032]';
  const sq = 'h-[9px] w-[12px] bg-[#b9bbbc] text-[#2c3032]';
  return (
    <aside className="flex w-[83px] shrink-0 flex-col pl-px">
      <p className="pl-px pt-[3px] leading-[12px] text-[#dfe3e4]">Tom 2</p>
      <div className="mt-[2px] ml-px mr-[4px] flex h-[9px] border border-[#3c4143] bg-linear-to-b from-[#4d5152] to-[#3c4041]"><i className="mt-[3px] h-px flex-1 bg-[#222627]" /><i className="w-[4px] bg-[#521f35]" /></div>
      <div className="ml-px mt-[3px] flex gap-px">
        <Btn className={`w-[12px] ${grey}`}>M</Btn><Btn className={`w-[12px] ${grey}`}>S</Btn>
        <Btn className={`ml-px w-[24px] ${grey}`}>Pad</Btn><Btn className="h-[12px] w-[25px] bg-[#88c9ff] text-[#22282b]">Layer</Btn>
      </div>
      <button type="button" className="mt-[6px] flex h-[13px] items-center gap-[3px] rounded-t-[3px] bg-[#666d70] pl-[2px] text-[7px] font-bold text-white">Pad options...<Right className="h-[6px] w-[6px]" /></button>
      <ul className="flex flex-1 flex-col bg-[#666d70] text-[7px]">
        {['80s_DrumBox_07', '80s_DrumBox_06', '80s_DrumBox_05'].map((l, i) => (
          <li key={l} className={`flex flex-1 flex-col border-b border-[#43484a] pl-px pr-[4px] ${i ? 'text-[#2c3133]' : 'bg-[#edf0f1] text-[#1d2021]'}`}>
            <span className="leading-[12px]">{l}</span>
            <span className="flex gap-[2px]"><Btn className={sq}>M</Btn><Btn className={sq}>S</Btn><Meter /></span>
          </li>
        ))}
        {[0, 1, 2, 3, 4].map((n) => <li key={n} className="flex-1 border-b border-[#43484a] pl-px leading-[12px] text-[#3f4547]">Empty Layer</li>)}
      </ul>
    </aside>
  );
}

const Handle = ({ className = '' }) => <i className={`absolute h-[6px] w-[6px] rounded-full border border-white bg-black ${className}`} />;

function Waveform() {
  return (
    <div className="relative mx-[4px] mt-[3px] overflow-hidden">
      <div className="grid h-[22px] grid-cols-4 bg-[#666d70] text-[7px] leading-[13px] text-[#d5d9da]">
        {['1.1.1', '1.1.2', '1.1.3', '1.1.4'].map((t, i) => <span key={t} className={`mt-px ${i ? 'border-l border-[#a9aeb0] pl-px' : 'pl-[3px]'}`}>{t}</span>)}
      </div>
      <div className="relative h-[76px] border-x border-t border-[#6aa5d8] bg-linear-to-b from-[#bccfe0] via-[#b1c5d9] to-[#c5d7e5]">
        <svg viewBox="0 0 642 75" preserveAspectRatio="none" className="block h-full w-full">
          <path d="M0 38H642" stroke="#7f93a3" strokeWidth="0.800" />
          <path d="M160.500 0V75M321.500 0V75M482.500 0V75" stroke="#d3dfe9" strokeWidth="0.800" />
          <path d={wavePath(38, 1, 2.6)} fill="#64798a" />
        </svg>
        <span className="absolute left-1/2 top-[7px] -translate-x-1/2 rounded-[2px] bg-[#8497a5] px-[3px] text-[7px] leading-[15px] text-[#e4eaee]">AMP ENVELOPE</span>
      </div>
      <div className="flex h-[14px] bg-[#484c4d]">
        <div className="relative flex-1 border-r border-[#c9cdce]">
          <svg viewBox="0 0 642 14" preserveAspectRatio="none" className="block h-full w-full"><path d={wavePath(7, 0.13, 0.3)} fill="#dfe3e4" stroke="#dfe3e4" strokeWidth="0.300" /></svg>
        </div>
        <div className="flex w-[96px] items-center justify-between bg-[#666d70] pl-[4px] pr-[3px] font-bold text-[#c9cdce]">
          <button type="button" className="text-[#88c9ff]">A</button>
          <button type="button">F</button>
          {['M0 4h5M9 4h5M5 2v4M9 2v4M5 4h4', 'M1 4h12M1 1v6M13 1v6M7 1v6M4 2v4M10 2v4', 'M1 1v6M3 4h8M5 2 3 4l2 2', 'M11 1v6M1 4h8M7 2l2 2-2 2'].map((d, i) => (
            <button type="button" key={d} aria-label={`Zoom mode ${i + 1}`} className={i === 1 ? 'text-[#88c9ff]' : ''}>
              <svg viewBox="0 0 14 8" fill="none" stroke="currentColor" strokeWidth="1.300" className="h-[6px] w-[10px]"><path d={d} /></svg>
            </button>
          ))}
          <button type="button">–</button>
          <button type="button">+</button>
        </div>
      </div>
      <Handle className="-left-[2px] top-[12px] h-[7px] w-[7px]" />
      <Handle className="-left-[2px] top-[23px]" />
      <Handle className="left-1/2 -ml-[3px] top-[22px]" />
      <Handle className="-right-px top-[12px] h-[7px] w-[7px]" />
      <Handle className="-right-[2px] top-[22px]" />
      <Handle className="-right-[2px] top-[91px]" />
      <Handle className="-left-[2px] top-[102px]" />
      <Handle className="right-[94px] top-[102px]" />
    </div>
  );
}

const Section = ({ title, className = '', children }) => (
  <section className={`flex min-w-0 flex-col ${className}`}>
    <h2 className="flex h-[13px] items-center justify-center bg-[#b9bbbc]">{title}</h2>
    <div className="relative flex h-[99px] flex-col border-r border-[#d3d7d9] pt-[5px] pr-[2px] [&>*]:shrink-0">{children}</div>
  </section>
);

const FADERS = [['A', 4], ['D', 6], ['H', 30], ['S', 87], ['R', 5]];

function Envelope({ title }) {
  return (
    <Section title={title}>
      <div className="-mt-px flex">
        <div className="flex flex-1 justify-around pr-px">
          {FADERS.map(([name, v]) => (
            <label key={name} className="relative flex flex-col items-center text-[7px] text-[#7d8488]">
              <svg viewBox="0 0 11 92" className="h-[92px] w-[11px]">
                <rect x="1" y="0" width="10" height="91" fill="#d3d6d8" />
                <rect x="0.500" y="0" width="8.500" height="91" fill="#848d92" />
                {v > 10 && <rect x="0.500" y={91 - v} width="8.500" height={v} fill="#484c4d" />}
                <path d="M0 88h11" stroke="#264a74" strokeWidth="2" />
                <circle cx="4.700" cy={91 - v} r="3.400" fill="#1b1e1f" stroke="#f1f3f4" strokeWidth="1.300" />
              </svg>
              <span className="leading-[10px]">{name}</span>
              <input type="range" className="sr-only" />
            </label>
          ))}
        </div>
        <div className="mt-px flex w-[28px] flex-col">
          <Knob label="A-C" /><Knob label="D-C" /><Knob label="R-C" />
        </div>
      </div>
    </Section>
  );
}

function SoundControls() {
  const grey = 'h-[13px] bg-[#b9bbbc] text-[#2c3032]';
  const cap = 'h-[15px] leading-[11px] text-center text-[7px] text-[#7d8488]';
  return (
    <div className="ml-[3px] mr-[4px] mt-[3px] grid flex-1 grid-cols-[65fr_38fr_68fr_78fr_41fr_79fr_34fr_102fr_102fr] gap-[5px] text-[#2c3032]">
      <Section title="SETUP">
        <Drop value="One shot" label="Playback" /><span className={cap}>Playback</span>
        <Drop value="Self" label="Choke" /><span className={cap}>Choke</span>
        <Btn className={grey}>Track Pitch</Btn><span className={cap}>Env Mode</span>
      </Section>
      <Section title="MIX">
        <Knob label="Gain" value={95} fill dark="#484c4d" />
        <Knob label="Pan" />
        <Btn className={`mt-[2px] ${grey}`}>Vintage</Btn>
        <div className="mt-[2px] flex gap-[2px]">
          <Btn aria-label="Reverse" className={`flex-1 ${grey}`}><svg viewBox="0 0 12 12" fill="none" stroke="currentColor" strokeWidth="1.600" className="h-[9px] w-[9px]"><circle cx="6" cy="6" r="4.800" /><path d="M7.500 3.800v4.400L3.800 6z" fill="currentColor" stroke="none" /></svg></Btn>
          <Btn aria-label="Invert phase" className={`flex-1 ${grey}`}><svg viewBox="0 0 12 12" fill="none" stroke="currentColor" strokeWidth="1.600" className="h-[9px] w-[9px]"><circle cx="6" cy="6" r="4" /><path d="M1 11 11 1" /></svg></Btn>
        </div>
      </Section>
      <Section title="TUNING">
        <svg viewBox="0 0 66 99" className="absolute left-px top-0 h-[99px] w-[66px]" stroke="#c2c6c8" fill="none"><path d="M24 42 16 72M43 42l8 30" /></svg>
        <div className="relative flex justify-center pl-[3px]"><Knob label="Tune" big /></div>
        <div className="relative mt-[16px] flex justify-center gap-[12px] pl-[3px]">
          <span className="flex w-[24px] justify-center"><Knob label="Octave" /></span>
          <span className="flex w-[24px] justify-center"><Knob label="Fine" /></span>
        </div>
      </Section>
      <Section title="FILTER">
        <svg viewBox="0 0 78 60" className="absolute left-0 top-0 h-[60px] w-[78px]" stroke="#c2c6c8" fill="none"><path d="M38 16 51 14M37 38l14 10" /></svg>
        <div className="relative flex justify-between pr-px">
          <div className="flex flex-col items-start"><Knob label="Cutoff" big off /><Btn className={`mt-[3px] w-[48px] ${grey}`}>Active</Btn></div>
          <div className="w-[24px]"><Knob label="Drive" off /><Knob label="Res" off /></div>
        </div>
        <div className="mt-[2px] flex flex-col gap-[2px]">
          <Drop value="SVF" label="Filter type" muted /><Drop value="LPF 2 pole" label="Filter mode" muted />
        </div>
      </Section>
      <Section title="PLAY"><Knob label="Pre delay" value={200} /><Knob label="Start Offset" /><Knob label="End Offset" /></Section>
      <Section title="LOOPING">
        <div className="grid grid-cols-2"><Knob label="Start Offset" off /><Knob label="End Offset" off /><Knob label="X-Fade" off /><Knob label="Curve" off /></div>
        <Btn className={`mt-[2px] ${grey}`}>Release</Btn><Btn className={`mt-[2px] ${grey}`}>Alternate</Btn>
      </Section>
      <Section title="TS">
        <Btn className={grey}>Active</Btn>
        <div className="mt-[9px]"><Knob label="Amount" /></div>
        <Btn className={`mt-[14px] ${grey}`}>Fast</Btn><Btn className={`mt-[2px] ${grey}`}>Track</Btn>
      </Section>
      <Envelope title="AMP ENVELOPE" />
      <Envelope title="FREE ENVELOPE" />
    </div>
  );
}

function App() {
  return (
    <div className="flex min-h-screen bg-white px-[301px] py-[150px] font-['DejaVu_Sans_Condensed','DejaVu_Sans',sans-serif] text-[8px] leading-[9px]">
      <main className="flex min-w-0 flex-1 flex-col bg-[#272c2d]">
        <Header />
        <div className="flex flex-1 pl-[3px] pr-[4px]">
          <div className="flex w-[251px] shrink-0 flex-col">
            <Browser />
            <div className="flex h-[7px] items-center justify-center"><Dots /></div>
            <Pads />
          </div>
          <div className="flex w-[6px] shrink-0 items-start justify-center pt-[250px]"><Dots vertical /></div>
          <div className="flex min-w-0 flex-1 flex-col">
            <Pattern />
            <div className="flex h-[6px] items-center justify-center"><Dots /></div>
            <div className="flex flex-1">
              <Layers />
              <div className="flex min-w-0 flex-1 flex-col rounded-tl-[3px] bg-[#edf0f1]">
                <Waveform />
                <SoundControls />
              </div>
            </div>
          </div>
        </div>
        <footer className="flex h-[26px] pl-[3px] pr-[5px] pt-[7px] text-[7px] text-[#dfe3e4]">
          <div className="grid flex-1 grid-cols-[repeat(29,minmax(0,1fr))] gap-[2px]">
            {SOURCES.map((s, i) => <button type="button" key={s} className={`h-[14px] ${i ? 'bg-[#4d5253]' : 'bg-[#88c9ff] text-[#22282b]'}`}>{s}</button>)}
          </div>
          <div className="-mt-[6px] ml-[9px] flex">
            {[1, 2, 3, 4].map((n) => (
              <label key={n} className="relative flex w-[31px] flex-col items-center leading-[8px] text-[#8f9597]">
                <MiniKnob color="#565b5c" className="h-[15px] w-[15px]" />Macro {n}
                <input type="range" className="sr-only" />
              </label>
            ))}
          </div>
        </footer>
      </main>
    </div>
  );
}

export default App;
